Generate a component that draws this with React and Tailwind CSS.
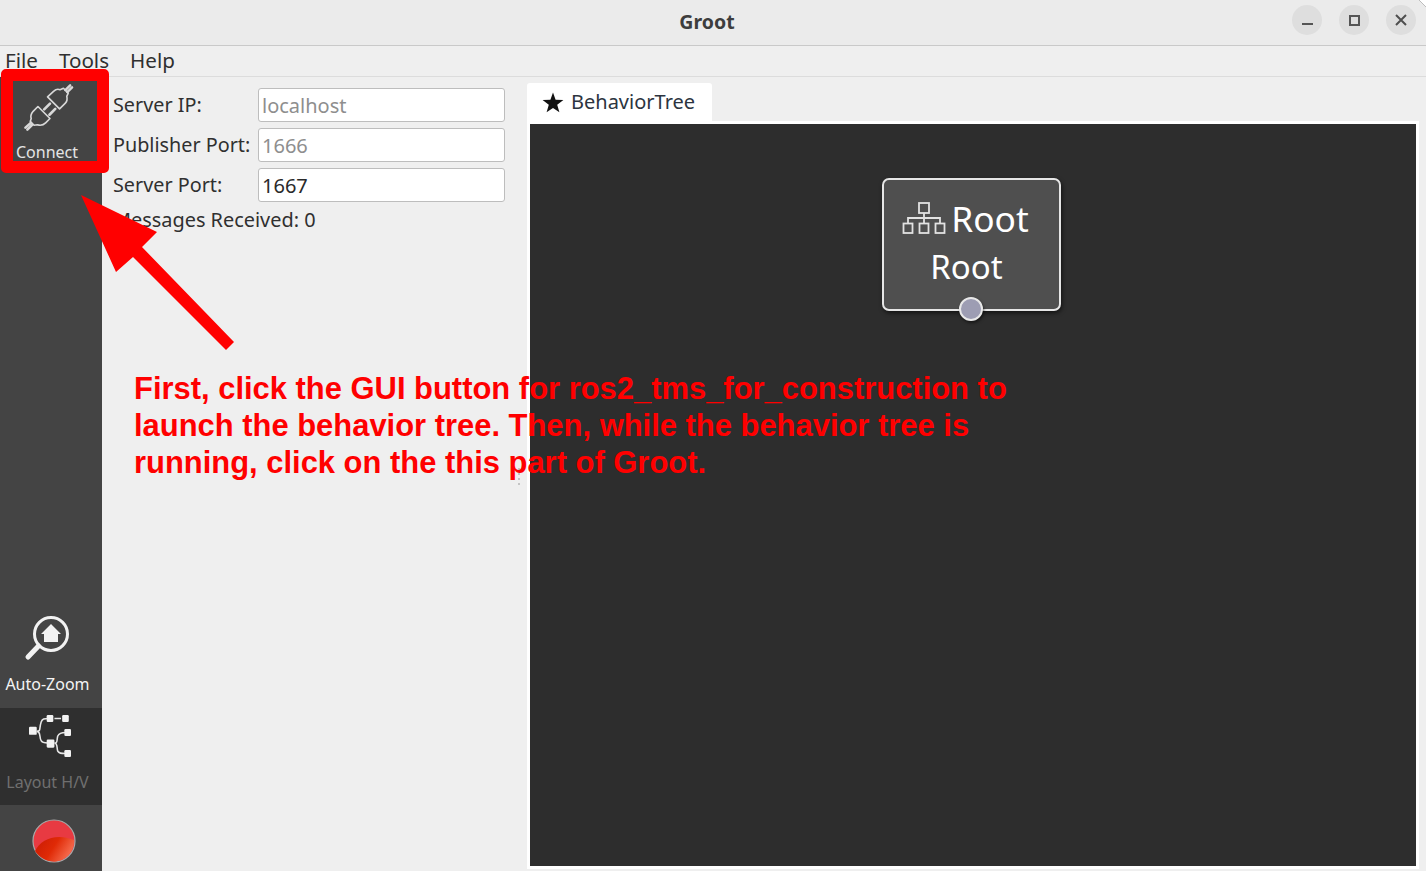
const ui = { fontFamily: '"Noto Sans", "Open Sans", sans-serif' };

function PlugIcon() {
  return (
    <svg className="ml-[3px]" width="50" height="50" viewBox="0 0 52 50" fill="none" stroke="#d8d8d8" strokeWidth="1.7" strokeLinejoin="round" strokeLinecap="round">
      <path d="M1.5 46.5 L7 41.5 M3.5 48.5 L8.5 43.5" strokeWidth="2.6" />
      <path d="M6.5 40 L10.5 44 L14 43.5 C17 44.5 20 44 22.5 41.5 L27 37 L14.5 24.5 L9.5 29.5 C7.5 32 6.5 34.5 7.5 37 Z" />
      <path d="M21 27.5 L27 21.5 M26.5 33 L32.5 27" strokeWidth="2.8" />
      <path d="M24.5 14.5 L37 27 L43 21 C45 19 45 16 44.5 14 L46 10.5 L41 5.5 L37.5 7 C35 6 33 6.5 31 8.5 Z" />
      <path d="M43 7.5 L48 2.5 M45 9.5 L50 4.5" strokeWidth="2.6" />
    </svg>
  );
}

function ZoomIcon() {
  return (
    <svg width="48" height="48" viewBox="0 0 48 48" fill="none">
      <circle cx="27" cy="20" r="16.5" stroke="#f2f2f2" strokeWidth="3" />
      <path d="M14.5 32 L4 43" stroke="#f2f2f2" strokeWidth="5" strokeLinecap="round" />
      <path d="M27 10 L37 20 L34 20 L34 28 L20 28 L20 20 L17 20 Z" fill="#f2f2f2" />
    </svg>
  );
}

function LayoutIcon() {
  return (
    <svg className="ml-[4px]" width="42" height="42" viewBox="1 3 38 36" preserveAspectRatio="none" fill="none" stroke="#e6e6e6" strokeWidth="1.4">
      <path d="M8 17 C12 17 10 15 12 9 C13 6 15 6 18 6 M8 17 C12 17 10 22 12 25 C13 27 15 27 18 27 M24 6 L30 6" />
      <path d="M24 27 C27 27 26 25 27 21 C28 19 30 18 34 18 M24 27 C27 27 26 31 27 34 C28 36 30 36 34 36" />
      <g fill="#f2f2f2" stroke="none">
        <rect x="1" y="13" width="7" height="7" rx="1" />
        <rect x="17" y="3" width="6" height="6" rx="1" />
        <rect x="31" y="3" width="6" height="6" rx="1" />
        <rect x="17" y="24" width="7" height="7" rx="1" />
        <rect x="33" y="15" width="6" height="6" rx="1" />
        <rect x="33" y="33" width="6" height="6" rx="1" />
      </g>
    </svg>
  );
}

function RecordIcon() {
  return (
    <svg width="44" height="44" viewBox="0 0 44 44">
      <defs>
        <linearGradient id="rec-lower" x1="0" y1="0" x2="1" y2="0.4">
          <stop offset="0" stopColor="#c81a04" />
          <stop offset="0.55" stopColor="#e02a06" />
          <stop offset="1" stopColor="#f56a4c" />
        </linearGradient>
      </defs>
      <circle cx="22" cy="22" r="21" fill="#e83a42" stroke="#a9a9a9" strokeWidth="1.2" />
      <path d="M3 32 C9 20 24 14 42 21 C42.5 33 33 42.5 22 42.5 C14 42.5 7 38 3 32 Z" fill="url(#rec-lower)" />
    </svg>
  );
}

function TreeIcon() {
  return (
    <svg width="44" height="33" viewBox="0 0 44 33" fill="none" stroke="#e2e2e2" strokeWidth="1.8">
      <rect x="17" y="1" width="10" height="10" />
      <rect x="1.5" y="21.5" width="9" height="9.5" />
      <rect x="17.5" y="21.5" width="9" height="9.5" />
      <rect x="33.5" y="21.5" width="9" height="9.5" />
      <path d="M22 11 V21.5 M6 21.5 V16 H38 V21.5" />
    </svg>
  );
}

function SideButton({ icon, label, className, labelClass }) {
  return (
    <div className={`flex flex-col items-center ${className}`}>
      {icon}
      <span className={`text-[16px] leading-[22px] whitespace-nowrap ${labelClass}`}>{label}</span>
    </div>
  );
}

function Field({ label, value, muted }) {
  return (
    <div className="flex items-center h-[34px]">
      <label className="w-[145px] text-[#303030] text-[19.8px] whitespace-nowrap">{label}</label>
      <input
        readOnly
        value={value}
        className={`w-[247px] h-[34px] bg-white border border-[#bdbdbd] rounded-[3px] px-[3px] text-[20px] outline-none ${muted ? 'text-[#8e8e8e]' : 'text-[#2a2a2a]'}`}
      />
    </div>
  );
}

export default function App() {
  return (
    <div className="relative w-[1426px] h-[871px] overflow-hidden bg-[#efefef] flex flex-col" style={ui}>
      <header className="relative h-[46px] shrink-0 bg-[#ebebeb] border-b border-[#c9c9c9] flex items-center justify-center pr-[12px]">
        <span className="font-bold text-[19.5px] text-[#3d3d3d] -mt-[1px]">Groot</span>
        <div className="absolute right-[10px] top-[5px] flex gap-[17px]">
          <button className="w-[30px] h-[30px] rounded-full bg-[#dedede] flex items-center justify-center">
            <span className="block w-[11px] h-[2px] bg-[#555] mt-[7px]" />
          </button>
          <button className="w-[30px] h-[30px] rounded-full bg-[#dedede] flex items-center justify-center">
            <span className="block w-[11px] h-[11px] border-2 border-[#555]" />
          </button>
          <button className="w-[30px] h-[30px] rounded-full bg-[#dedede] flex items-center justify-center">
            <svg width="12" height="12" viewBox="0 0 12 12" stroke="#4f4f4f" strokeWidth="2"><path d="M1 1 L11 11 M11 1 L1 11" /></svg>
          </button>
        </div>
      </header>

      <nav className="h-[31px] shrink-0 bg-[#efefef] border-b border-[#dcdcdc] flex items-center gap-[21px] pl-[5px] pb-[2px] text-[20.6px] text-[#303030]">
        <span>File</span>
        <span>Tools</span>
        <span>Help</span>
      </nav>

      <div className="flex flex-1 min-h-0">
        <aside className="w-[102px] shrink-0 bg-[#444444] flex flex-col justify-between">
          <SideButton
            className="pt-[5px] pr-[8px]"
            labelClass="text-[#e4e4e4] mt-[9px]"
            icon={<PlugIcon />}
            label="Connect"
          />
          <div className="flex flex-col">
            <SideButton
              className="h-[98px] pt-[4px] pr-[7px] gap-[11px]"
              labelClass="text-[#f4f4f4]"
              icon={<ZoomIcon />}
              label="Auto-Zoom"
            />
            <SideButton
              className="h-[97px] pt-[7px] pr-[7px] gap-[14px] bg-[#2f2f2f]"
              labelClass="text-[#6f6f6f]"
              icon={<LayoutIcon />}
              label="Layout H/V"
            />
            <div className="h-[66px] flex items-center justify-center pt-[5px] pl-[5px]">
              <RecordIcon />
            </div>
          </div>
        </aside>

        <section className="w-[425px] shrink-0 pl-[11px] pt-[11px] flex flex-col">
          <div className="flex flex-col gap-[6px]">
            <Field label="Server IP:" value="localhost" muted />
            <Field label="Publisher Port:" value="1666" muted />
            <Field label="Server Port:" value="1667" />
          </div>
          <p className="mt-[5px] text-[19.9px] leading-[26px] text-[#303030]">Messages Received: 0</p>
        </section>

        <main className="flex-1 min-w-0 pt-[6px] pr-[7px] pb-[2px] flex flex-col">
          <div className="h-[38px] w-[185px] shrink-0 bg-white rounded-t-[3px] flex items-center gap-[7px] pl-[15px] text-[20px] text-[#2c3440]">
            <svg width="22" height="21" viewBox="0 0 22 21" fill="#111"><path d="M11 0.5 L13.6 7.8 L21.4 8 L15.2 12.8 L17.4 20.3 L11 15.9 L4.6 20.3 L6.8 12.8 L0.6 8 L8.4 7.8 Z" /></svg>
            <span>BehaviorTree</span>
          </div>
          <div className="flex-1 min-h-0 bg-[#2d2d2d] border-[3px] border-white relative">
            <div className="absolute left-[352px] top-[54px] w-[179px] h-[133px] rounded-[7px] bg-[#4f4f4f] border-2 border-[#e6e6e6] shadow-[1px_2px_4px_rgba(0,0,0,0.6)] flex flex-col items-center text-white leading-[47px] pt-[15px]">
              <div className="flex items-center gap-[5px] pr-[12px] text-[35.3px]">
                <TreeIcon />
                <span>Root</span>
              </div>
              <div className="pr-[10px] text-[33px] mt-[1px]">Root</div>
              <span className="absolute left-[75px] top-[117px] w-[24px] h-[24px] rounded-full bg-[#9d9db3] border-2 border-[#e8e8e8] shadow-[1px_2px_3px_rgba(0,0,0,0.5)]" />
            </div>
          </div>
        </main>
      </div>

      {/* Splitter handle dots */}
      <div className="absolute left-[518px] top-[468px] flex flex-col gap-[3px]">
        <span className="w-[2px] h-[2px] bg-[#c4c4c4]" />
        <span className="w-[2px] h-[2px] bg-[#c4c4c4]" />
        <span className="w-[2px] h-[2px] bg-[#c4c4c4]" />
        <span className="w-[2px] h-[2px] bg-[#c4c4c4]" />
      </div>

      {/* Window corner */}
      <svg className="absolute right-0 top-0" width="8" height="8" viewBox="0 0 8 8">
        <path d="M1 0 H8 V7 Z" fill="#ffffff" />
        <path d="M1 0 L8 7" stroke="#bdbdbd" strokeWidth="1" />
      </svg>

      {/* Annotations */}
      <div className="absolute left-[1px] top-[69px] w-[108px] h-[104px] border-[12px] border-[#ff0000] rounded-[5px]" />
      <svg className="absolute left-0 top-0 pointer-events-none" width="300" height="400" viewBox="0 0 300 400">
        <path d="M81 195 L157 232 L142 247 L234 342 L226 350 L133 257 L116 272 Z" fill="#ff0000" />
      </svg>
      <p className="absolute left-[134px] top-[370px] whitespace-nowrap font-bold text-[#ff0000] text-[30.93px] leading-[37px]" style={{ fontFamily: '"Liberation Sans", Arial, sans-serif' }}>
        First, click the GUI button for ros2_tms_for_construction to<br />
        launch the behavior tree. Then, while the behavior tree is<br />
        running, click on the this part of Groot.
      </p>
    </div>
  );
}
